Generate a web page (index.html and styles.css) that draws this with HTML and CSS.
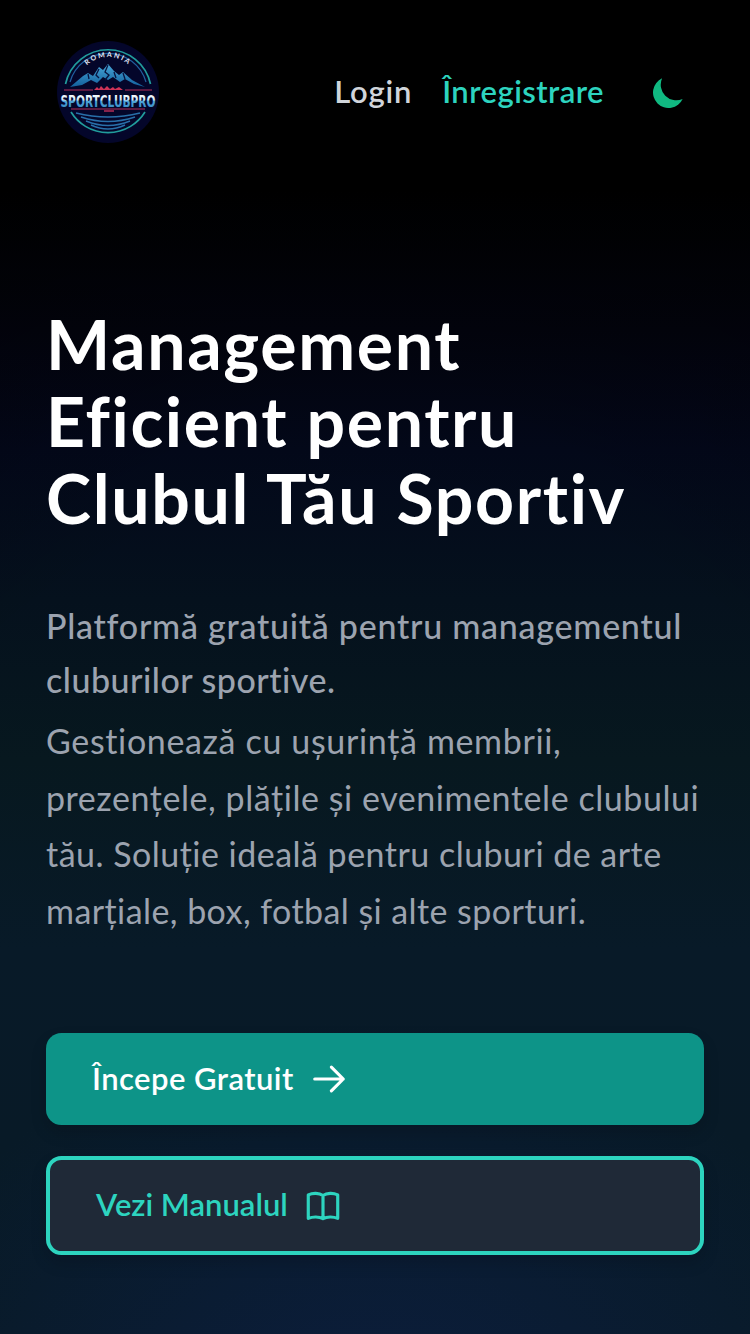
FILE: index.html
```html
<!DOCTYPE html>
<html lang="ro">
<head>
<meta charset="utf-8">
<title>SportClubPro</title>
<link rel="stylesheet" href="styles.css">
</head>
<body>
<div class="page">
  <header class="header">
    <svg class="logo" viewBox="0 0 102 102" role="img" aria-label="SportClubPro">
      <defs>
        <linearGradient id="ice" x1="0" y1="0" x2="0" y2="1"><stop offset="0" stop-color="#48a5d8"/><stop offset="1" stop-color="#12609b"/></linearGradient>
        <linearGradient id="word" gradientUnits="userSpaceOnUse" x1="0" y1="53" x2="0" y2="66"><stop offset="0" stop-color="#ffffff"/><stop offset=".46" stop-color="#cfe6f5"/><stop offset=".54" stop-color="#4fa5d8"/><stop offset="1" stop-color="#3b8fc8"/></linearGradient>
        <path id="arc" d="M22 36 A31 31 0 0 1 80 36"/>
      </defs>
      <circle cx="51" cy="51" r="51" fill="#04062a"/>
      <g fill="none" stroke="#219c9c" stroke-width="1.700">
        <path d="M8.500 43 A43.500 43.500 0 0 1 93.500 43"/>
        <path d="M14 71 A43.500 43.500 0 0 0 88 71"/>
      </g>
      <path d="M13 41 A39.500 39.500 0 0 1 89 41" fill="none" stroke="#205f9e" stroke-width="1.200"/>
      <text class="logo-arc"><textPath href="#arc" startOffset="50%" text-anchor="middle">ROMANIA</textPath></text>
      <path fill="url(#ice)" d="M13 46 26 35 31 32 36 35 42 26 46 29 51 23 57 30 62 34 66 31 75 39 88 46 77 43 68 38 63 41 56 36 51 39 46 36 40 42 34 39 25 44Z"/>
      <path fill="none" stroke="#07123e" stroke-width="1.300" d="M51 24 48 31 52 34 48 39M42 28 39 34 42 37M31 33 32 38M57 31 59 37M66 32 68 38"/>
      <path d="M7 49H36M68 49H95M14 68H88" stroke="#b32c57" stroke-width="1"/>
      <path d="M37 49 40 46 42 48 44 45 47 48 50 45 53 48 56 46 58 48 62 46 66 49Z" fill="#d03357"/>
      <text class="logo-word" x="51" y="65.500" text-anchor="middle" textLength="95" lengthAdjust="spacingAndGlyphs" fill="url(#word)">SPORTCLUBPRO</text>
      <path d="M47 70h10" stroke="#b32c57" stroke-width="1.500"/>
      <g fill="none" stroke="#286fa9" stroke-width="1.400">
        <path d="M19 72Q51 80 83 72M24 76Q51 85 78 76M29 80Q51 89 73 80M34 84Q51 92 68 84"/>
      </g>
    </svg>
    <nav class="nav">
      <a class="nav-link login">Login</a>
      <a class="nav-link register">Înregistrare</a>
      <svg class="moon" viewBox="2 2 16 16" aria-label="Temă"><path fill="#10b981" d="M17.293 13.293A8 8 0 016.707 2.707a8.001 8.001 0 1010.586 10.586z"/></svg>
    </nav>
  </header>
  <main class="hero">
    <h1 class="title"><span class="t">Management</span><span class="t">Eficient pentru</span><span class="t">Clubul Tău Sportiv</span></h1>
    <p class="lead"><span class="t l1">Platformă gratuită pentru managementul</span><span class="t l2">cluburilor sportive.</span></p>
    <p class="text"><span class="t p1">Gestionează cu ușurință membrii,</span><span class="t p2">prezențele, plățile și evenimentele clubului</span><span class="t p3">tău. Soluție ideală pentru cluburi de arte</span><span class="t p4">marțiale, box, fotbal și alte sporturi.</span></p>
    <div class="actions">
      <a class="button primary"><span class="label">Începe Gratuit</span>
        <svg class="icon" viewBox="0 0 24 24"><path d="M13.500 4.500 21 12m0 0-7.500 7.500M21 12H3"/></svg></a>
      <a class="button secondary"><span class="label">Vezi Manualul</span>
        <svg class="icon" viewBox="0 0 24 24"><path d="M2.700 5C5.500 3.700 9.500 3.700 12 5.400C14.500 3.700 18.500 3.700 21.300 5V19.800C18.500 18.600 14.500 18.600 12 20C9.500 18.600 5.500 18.600 2.700 19.800ZM12 5.400V20"/></svg></a>
    </div>
  </main>
</div>
</body>
</html>
```
FILE: styles.css
```css
* { box-sizing: border-box; }
body { margin: 0; background: #000; font-family: Lato, "Open Sans", sans-serif; }
.page {
  height: 1334px;
  overflow: hidden;
  background:
    radial-gradient(ellipse 520px 420px at 50% 108%, rgba(13, 31, 70, .75), transparent),
    radial-gradient(ellipse 900px 1150px at 50% 100%, transparent 72%, rgba(0, 0, 0, .2)),
    linear-gradient(#000 190px, #02030d 330px, #03081a 450px, #05111d 600px, #07181f 760px, #081a28 950px, #081a26 1334px);
}
.header { display: flex; height: 184px; align-items: center; justify-content: space-between; padding: 0 66px 0 57px; }
.logo { width: 102px; height: 102px; overflow: visible; }
.logo-arc { font: 700 7px Lato, sans-serif; letter-spacing: 1.8px; fill: #e6e8f5; }
.logo-word { font: 700 16.5px "DejaVu Sans", sans-serif; }
.nav { display: flex; align-items: center; }
.nav-link { padding-bottom: 2px; font-size: 31px; font-weight: 600; white-space: nowrap; }
.login { margin-right: 30px; color: #d1d5db; letter-spacing: .8px; }
.register { margin-right: 49px; color: #2dd4bf; letter-spacing: .45px; }
.moon { width: 31px; height: 31px; }
.hero { padding: 121px 46px 0; }
.t { display: block; }
.title { margin: 0; color: #fff; font-size: 68px; font-weight: 700; line-height: 77px; letter-spacing: 1.65px; white-space: nowrap; }
.lead { margin: 63px 0 0; color: #9ca3af; font-size: 34px; font-weight: 500; line-height: 54px; white-space: nowrap; }
.text { margin: 6px 0 0; color: #9ca3af; font-size: 34px; font-weight: 400; line-height: 56.5px; white-space: nowrap; }
.l1 { letter-spacing: .74px; }
.l2 { letter-spacing: .5px; }
.p1 { letter-spacing: .65px; }
.p2 { letter-spacing: .56px; }
.p3 { letter-spacing: .48px; }
.p4 { letter-spacing: .43px; }
.actions { display: flex; flex-direction: column; gap: 31px; margin-top: 94px; }
.button { display: flex; align-items: center; gap: 16px; border-radius: 15.4px; font-size: 31px; font-weight: 600; box-shadow: 0 8px 16px rgba(0, 0, 0, .15); }
.label { padding-bottom: 3px; }
.primary { height: 92px; padding: 0 46px; background: #0d9488; color: #fff; letter-spacing: .45px; }
.secondary { height: 99px; padding: 0 46px; background: #1f2937; border: 4px solid #2dd4bf; color: #2dd4bf; }
.icon { width: 38px; height: 38px; fill: none; stroke: currentColor; stroke-width: 2; stroke-linecap: round; stroke-linejoin: round; }
```
